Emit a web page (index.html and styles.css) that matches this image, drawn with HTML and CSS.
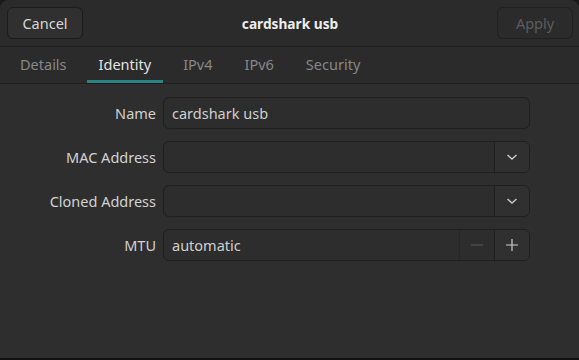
FILE: index.html
```html
<!DOCTYPE html>
<html>
<head>
<meta charset="utf-8">
<link rel="stylesheet" href="styles.css">
</head>
<body>
<div class="window">
  <header class="headerbar">
    <button class="btn">Cancel</button>
    <div class="title">cardshark usb</div>
    <button class="btn disabled">Apply</button>
  </header>
  <nav class="tabs">
    <div class="tab">Details</div>
    <div class="tab active">Identity</div>
    <div class="tab">IPv4</div>
    <div class="tab">IPv6</div>
    <div class="tab">Security</div>
  </nav>
  <main class="form">
    <div class="row">
      <label class="label">Name</label>
      <div class="field"><span class="value">cardshark usb</span></div>
    </div>
    <div class="row">
      <label class="label">MAC Address</label>
      <div class="field combo"><span class="value"></span>
        <div class="side"><svg width="12" height="8" viewBox="0 0 12 8"><path d="M1.5 2 L6 6 L10.5 2" fill="none" stroke="#c8c8c8" stroke-width="1.4"/></svg></div>
      </div>
    </div>
    <div class="row">
      <label class="label">Cloned Address</label>
      <div class="field combo"><span class="value"></span>
        <div class="side"><svg width="12" height="8" viewBox="0 0 12 8"><path d="M1.5 2 L6 6 L10.5 2" fill="none" stroke="#c8c8c8" stroke-width="1.4"/></svg></div>
      </div>
    </div>
    <div class="row">
      <label class="label">MTU</label>
      <div class="field combo"><span class="value">automatic</span>
        <div class="side dim"><svg width="14" height="14" viewBox="0 0 14 14"><path d="M1 7 H13" stroke="#5a5a5a" stroke-width="1.2"/></svg></div>
        <div class="side"><svg width="14" height="14" viewBox="0 0 14 14"><path d="M1 7 H13 M7 1 V13" stroke="#cfcfcf" stroke-width="1.2"/></svg></div>
      </div>
    </div>
  </main>
  <div class="bottom"></div>
</div>
</body>
</html>
```
FILE: styles.css
```css
* { box-sizing: border-box; }
html, body { margin: 0; padding: 0; background: #1a1a1a; }
body { font-family: "Noto Sans", "DejaVu Sans", sans-serif; font-size: 14.5px; }
.window {
  width: 579px; height: 360px;
  background: #2e2e2e;
  border-radius: 9px 9px 0 0;
  overflow: hidden;
  display: flex; flex-direction: column;
}
.headerbar {
  height: 47px;
  background: #2b2b2b;
  border-bottom: 1px solid #1e1e1e;
  display: flex; align-items: center; justify-content: space-between;
  padding: 0 6px 0 7px;
  flex-shrink: 0;
}
.btn {
  width: 76px; height: 32px;
  background: #303030;
  border: 1px solid #1c1c1c;
  border-radius: 6px;
  color: #d6d6d6;
  font-family: inherit; font-size: 14.5px;
  padding: 0;
}
.btn.disabled { background: #2b2b2b; color: #5d5d5d; border-color: #202020; }
.title { color: #ededed; font-weight: bold; font-size: 13.7px; }
.tabs {
  height: 37px;
  background: #2b2b2b;
  border-bottom: 1px solid #1e1e1e;
  display: flex; align-items: stretch;
  padding-left: 8px;
  flex-shrink: 0;
}
.tab {
  padding: 0 12px;
  margin-right: 8px;
  display: flex; align-items: center;
  color: #878787;
  border-bottom: 3px solid transparent;
}
.tab.active { color: #e3e3e3; border-bottom-color: #2c8481; }
.form {
  flex: 1;
  padding: 13px 49px 0 0;
  display: flex; flex-direction: column; gap: 12px;
}
.row { display: flex; align-items: center; height: 32px; }
.label {
  width: 163px; padding-right: 7px;
  text-align: right;
  color: #d2d2d2;
}
.field {
  flex: 1; height: 32px;
  border: 1px solid #1f1f1f;
  border-radius: 6px;
  background: #2d2d2d;
  display: flex; align-items: stretch;
  overflow: hidden;
}
.value { flex: 1; padding-left: 8px; color: #cfcfcf; display: flex; align-items: center; }
.side {
  width: 35px;
  border-left: 1px solid #1f1f1f;
  background: #303030;
  display: flex; align-items: center; justify-content: center;
}
.side.dim { background: #2d2d2d; border-left-color: #262626; }
.bottom { height: 2px; background: #111; flex-shrink: 0; }
```
